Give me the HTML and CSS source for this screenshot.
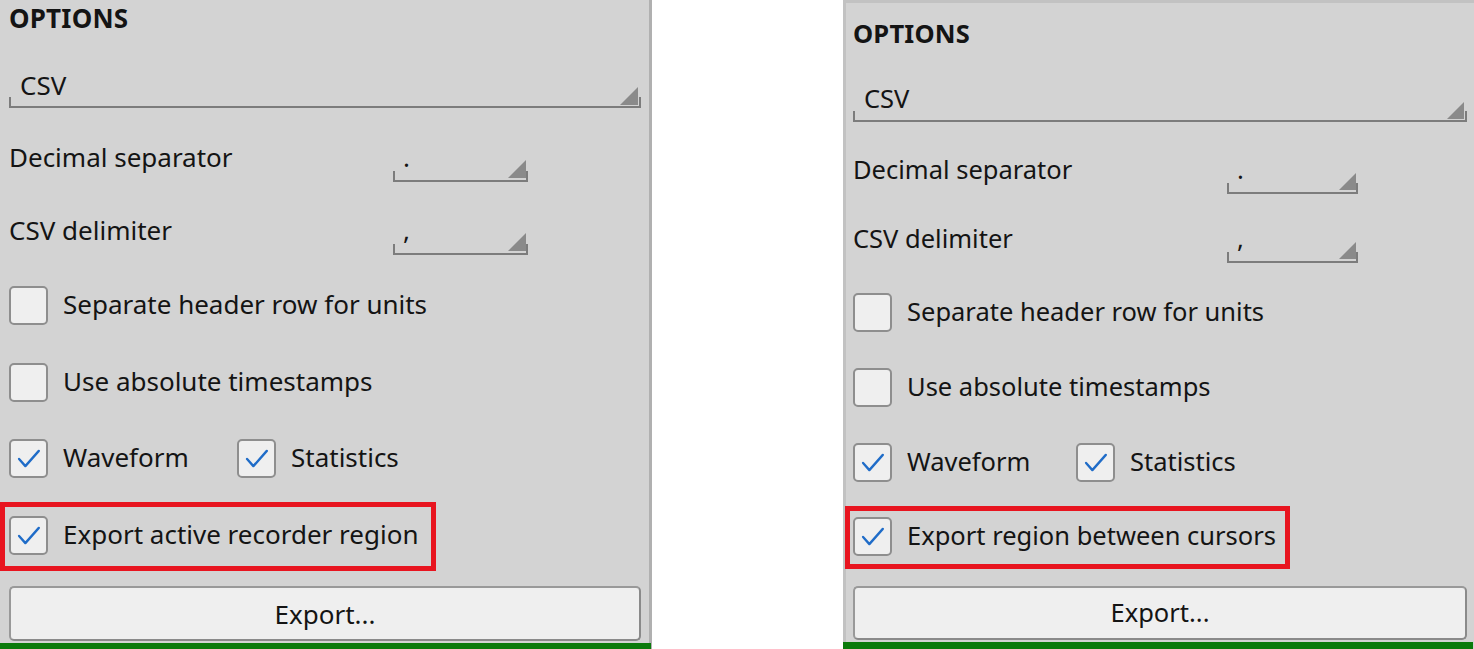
FILE: index.html
```html
<!DOCTYPE html>
<html lang="en">
<head>
<meta charset="utf-8">
<title>Export options</title>
<link rel="stylesheet" href="styles.css">
</head>
<body>
<div class="stage">
  <section class="panel panel--a">
    <h2 class="heading">OPTIONS</h2>
    <div class="combo combo--wide"><span class="combo-value">CSV</span><span class="combo-arrow"></span></div>
    <div class="field field--dec">
      <span class="field-label">Decimal separator</span>
      <div class="combo combo--small"><span class="combo-value">.</span><span class="combo-arrow"></span></div>
    </div>
    <div class="field field--delim">
      <span class="field-label">CSV delimiter</span>
      <div class="combo combo--small"><span class="combo-value">,</span><span class="combo-arrow"></span></div>
    </div>
    <label class="check check--units"><span class="box"></span><span class="check-text">Separate header row for units</span></label>
    <label class="check check--abs"><span class="box"></span><span class="check-text">Use absolute timestamps</span></label>
    <div class="check-pair">
      <label class="check check--first"><span class="box is-on"><svg viewBox="0 0 39 39"><polyline points="9,20 16,28 31,11"/></svg></span><span class="check-text">Waveform</span></label>
      <label class="check"><span class="box is-on"><svg viewBox="0 0 39 39"><polyline points="9,20 16,28 31,11"/></svg></span><span class="check-text">Statistics</span></label>
    </div>
    <div class="highlight">
      <label class="check"><span class="box is-on"><svg viewBox="0 0 39 39"><polyline points="9,20 16,28 31,11"/></svg></span><span class="check-text">Export active recorder region</span></label>
    </div>
    <button class="export-btn" type="button">Export...</button>
    <div class="status-bar"></div>
  </section>

  <section class="panel panel--b">
    <h2 class="heading">OPTIONS</h2>
    <div class="combo combo--wide"><span class="combo-value">CSV</span><span class="combo-arrow"></span></div>
    <div class="field field--dec">
      <span class="field-label">Decimal separator</span>
      <div class="combo combo--small"><span class="combo-value">.</span><span class="combo-arrow"></span></div>
    </div>
    <div class="field field--delim">
      <span class="field-label">CSV delimiter</span>
      <div class="combo combo--small"><span class="combo-value">,</span><span class="combo-arrow"></span></div>
    </div>
    <label class="check check--units"><span class="box"></span><span class="check-text">Separate header row for units</span></label>
    <label class="check check--abs"><span class="box"></span><span class="check-text">Use absolute timestamps</span></label>
    <div class="check-pair">
      <label class="check check--first"><span class="box is-on"><svg viewBox="0 0 39 39"><polyline points="9,20 16,28 31,11"/></svg></span><span class="check-text">Waveform</span></label>
      <label class="check"><span class="box is-on"><svg viewBox="0 0 39 39"><polyline points="9,20 16,28 31,11"/></svg></span><span class="check-text">Statistics</span></label>
    </div>
    <div class="highlight">
      <label class="check"><span class="box is-on"><svg viewBox="0 0 39 39"><polyline points="9,20 16,28 31,11"/></svg></span><span class="check-text">Export region between cursors</span></label>
    </div>
    <button class="export-btn" type="button">Export...</button>
    <div class="status-bar"></div>
  </section>
</div>
</body>
</html>
```

FILE: styles.css
```css
* { box-sizing: border-box; }

html, body {
  margin: 0;
  padding: 0;
  background: #ffffff;
  height: 649px;
  overflow: hidden;
}

.stage {
  display: flex;
  width: 1474px;
  height: 649px;
  gap: 191px;
  align-items: stretch;
}

.panel {
  --fs: 26px;
  --lh: 36px;
  --pl: 9px;
  --pr: 8px;
  --bl: 0px;
  --br: 3px;
  --bt: 0px;
  --pt: 0px;
  --m-combo: 31px;
  --combo-pb: 3px;
  --m-dec: 31px;
  --m-delim: 30px;
  --small-pb: 5px;
  --label-w: 384px;
  --small-w: 135px;
  --m-units: 31px;
  --m-abs: 38px;
  --m-pair: 37px;
  --pair-w: 228px;
  --m-hl: 24px;
  --hl-ml: -9px;
  --hl-pl: 4px;
  --hl-pt: 9px;
  --hl-pb: 11px;
  --hl-pr: 13px;
  --m-btn: 15px;
  --btn-h: 55px;
  --m-bar: 2px;
  --bar-h: 6px;
  --tri: 18px;

  display: flex;
  flex-direction: column;
  align-items: stretch;
  height: 649px;
  background: #d3d3d3;
  color: #141414;
  font-family: "Noto Sans", "DejaVu Sans", sans-serif;
  font-size: var(--fs);
  line-height: var(--lh);
  padding: var(--pt) var(--pr) 0 var(--pl);
  border-style: solid;
  border-color: #b9b9b9;
  border-width: var(--bt) var(--br) 0 var(--bl);
}

.panel--a {
  width: 652px;
  flex: 0 0 652px;
  border-right-color: #b0b0b0;
}

.panel--b {
  --fs: 25.5px;
  --lh: 35px;
  --pl: 7px;
  --pr: 7px;
  --bl: 3px;
  --br: 0px;
  --bt: 3px;
  --pt: 13px;
  --m-combo: 30px;
  --combo-pb: 4px;
  --m-dec: 30px;
  --m-delim: 27px;
  --small-pb: 5px;
  --label-w: 374px;
  --small-w: 131px;
  --m-units: 30px;
  --m-abs: 36px;
  --m-pair: 36px;
  --pair-w: 223px;
  --m-hl: 24px;
  --hl-ml: -8px;
  --hl-pl: 3px;
  --hl-pt: 6px;
  --hl-pb: 8px;
  --hl-pr: 9px;
  --m-btn: 17px;
  --btn-h: 54px;
  --m-bar: 2px;
  --bar-h: 7px;
  --tri: 17px;
  width: 631px;
  flex: 0 0 631px;
  border-color: #c2c2c2;
}

.heading {
  margin: 0;
  font-size: var(--fs);
  line-height: var(--lh);
  font-weight: 700;
  letter-spacing: 0.2px;
}

/* combo boxes: underline with little end ticks */
.combo {
  display: flex;
  justify-content: space-between;
  align-items: flex-end;
  border-bottom: 2px solid #7c7c7c;
  background:
    linear-gradient(#7c7c7c, #7c7c7c) left bottom / 2px 9px no-repeat,
    linear-gradient(#7c7c7c, #7c7c7c) right bottom / 2px 9px no-repeat;
}

.combo--wide {
  margin-top: var(--m-combo);
  padding: 0 3px var(--combo-pb) 11px;
}

.combo--small {
  width: var(--small-w);
  flex: 0 0 auto;
  padding: 0 2px var(--small-pb) 10px;
}

.combo-value {
  line-height: var(--lh);
}

.combo-arrow {
  width: var(--tri);
  height: var(--tri);
  margin-bottom: -1px;
  background: #8a8a8a;
  clip-path: polygon(100% 0, 100% 100%, 0 100%);
}

.combo--wide .combo-arrow {
  margin-bottom: calc(0px - var(--combo-pb) + 1px);
}

.combo--small .combo-arrow {
  margin-bottom: calc(0px - var(--small-pb) + 2px);
}

.field {
  display: flex;
  align-items: flex-start;
}

.field--dec { margin-top: var(--m-dec); }
.field--delim { margin-top: var(--m-delim); }

.field-label {
  width: var(--label-w);
  flex: 0 0 auto;
}

/* checkboxes */
.check {
  display: flex;
  align-items: center;
  gap: 15px;
  height: 39px;
  cursor: default;
}

.check--units { margin-top: var(--m-units); }
.check--abs { margin-top: var(--m-abs); }

.check-text {
  padding-bottom: 3px;
  white-space: nowrap;
}

.box {
  width: 39px;
  height: 39px;
  flex: 0 0 39px;
  border: 2px solid #8e8e8e;
  border-radius: 5px;
  background: #efefef;
  display: flex;
  align-items: center;
  justify-content: center;
}

.box svg {
  width: 35px;
  height: 35px;
}

.box polyline {
  fill: none;
  stroke: #1f6cc8;
  stroke-width: 2.6;
  stroke-linecap: round;
  stroke-linejoin: round;
}

.check-pair {
  display: flex;
  margin-top: var(--m-pair);
}

.check--first {
  width: var(--pair-w);
  flex: 0 0 auto;
}

/* red annotation frame */
.highlight {
  align-self: flex-start;
  margin-top: var(--m-hl);
  margin-left: var(--hl-ml);
  padding: var(--hl-pt) var(--hl-pr) var(--hl-pb) var(--hl-pl);
  border: 5px solid #e8141f;
}

.export-btn {
  margin-top: var(--m-btn);
  height: var(--btn-h);
  width: 100%;
  background: #efefef;
  border: 2px solid #999999;
  border-right-color: #8a8a8a;
  border-bottom-color: #8a8a8a;
  border-radius: 5px;
  font-family: inherit;
  font-size: var(--fs);
  color: #141414;
  line-height: 1;
  padding: 0;
}

.status-bar {
  margin-top: var(--m-bar);
  height: var(--bar-h);
  margin-left: calc(0px - var(--pl) - var(--bl));
  margin-right: calc(0px - var(--pr) - var(--br) + 1px);
  background: #0b7a0b;
}
```
